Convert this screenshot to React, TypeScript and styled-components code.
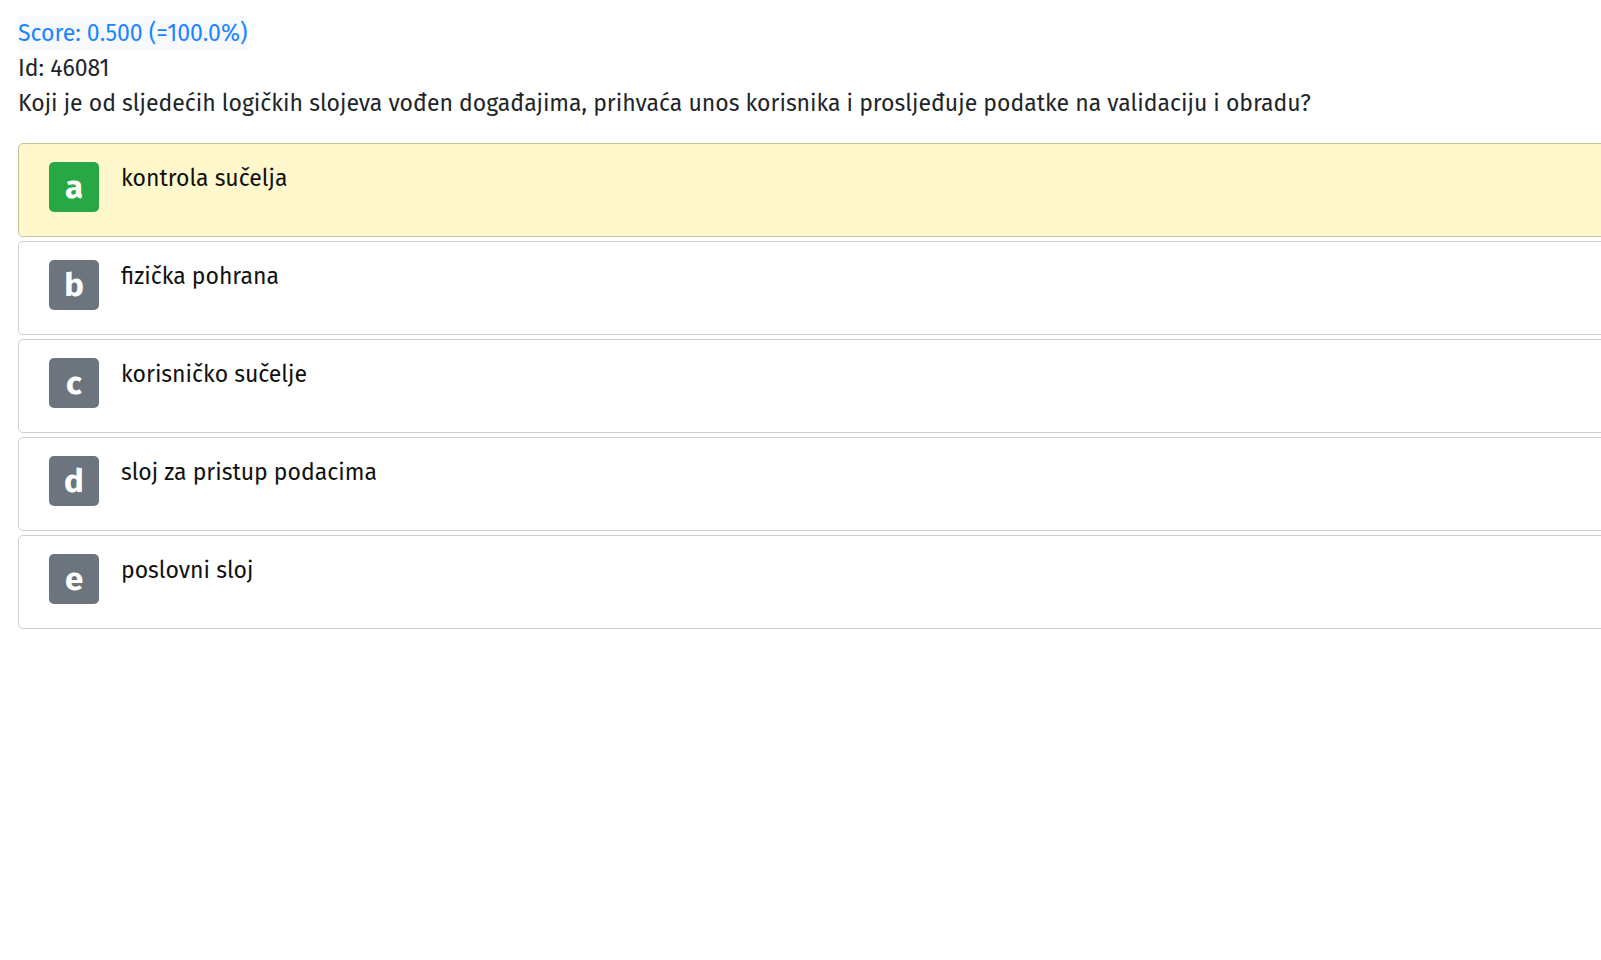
import styled, { createGlobalStyle } from 'styled-components'

const GlobalStyle = createGlobalStyle`
  html, body {
    margin: 0;
    padding: 0;
    background: #fff;
    overflow-x: hidden;
  }
  body {
    font-family: "Fira Sans", "Noto Sans", "Open Sans", sans-serif;
    color: #212529;
  }
`

type Answer = { key: string; text: string; correct?: boolean }

const answers: Answer[] = [
  { key: 'a', text: 'kontrola sučelja', correct: true },
  { key: 'b', text: 'fizička pohrana' },
  { key: 'c', text: 'korisničko sučelje' },
  { key: 'd', text: 'sloj za pristup podacima' },
  { key: 'e', text: 'poslovni sloj' },
]

export default function App() {
  return (
    <>
      <GlobalStyle />
      <Page>
        <Score>Score: 0.500 (=100.0%)</Score>
        <Line>Id: 46081</Line>
        <Line>
          Koji je od sljedećih logičkih slojeva vođen događajima, prihvaća unos korisnika i prosljeđuje podatke
          na validaciju i obradu?
        </Line>
        <Answers>
          {answers.map(a => (
            <Card key={a.key} $correct={a.correct}>
              <Badge $correct={a.correct}>{a.key}</Badge>
              <AnswerText>{a.text}</AnswerText>
            </Card>
          ))}
        </Answers>
      </Page>
    </>
  )
}

const Page = styled.div`
  padding: 16px 0 0 18px;
  font-size: 23px;
  line-height: 35px;
  width: 1660px;
`

const Score = styled.div`
  display: inline-block;
  color: #1a85ff;
  background: #f7f9fc;
`

const Line = styled.div`
  color: #212529;
`

const Answers = styled.div`
  margin-top: 22px;
  display: flex;
  flex-direction: column;
  gap: 4px;
`

const Card = styled.div<{ $correct?: boolean }>`
  display: flex;
  align-items: flex-start;
  gap: 22px;
  height: 94px;
  box-sizing: border-box;
  padding: 18px 0 0 30px;
  border: 1px solid ${p => (p.$correct ? '#c6c29e' : '#cfcfcf')};
  border-radius: 5px;
  background: ${p => (p.$correct ? '#fff8cd' : '#fff')};
`

const Badge = styled.div<{ $correct?: boolean }>`
  width: 50px;
  height: 50px;
  flex: none;
  border-radius: 5px;
  background: ${p => (p.$correct ? '#28a745' : '#6c757d')};
  color: #fff;
  font-weight: 700;
  font-size: 33px;
  line-height: 50px;
  text-align: center;
`

const AnswerText = styled.div`
  margin-top: -1px;
  color: #111;
`
